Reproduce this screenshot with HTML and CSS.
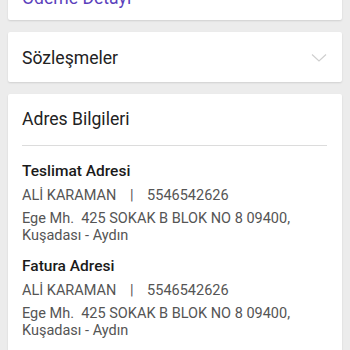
FILE: index.html
```
<!DOCTYPE html>
<html lang="tr">
<head>
<meta charset="utf-8">
<link rel="stylesheet" href="styles.css">
</head>
<body>
<div class="page">
  <div class="card card-top">
    <span class="link">Ödeme Detayı</span>
  </div>
  <div class="card card-row">
    <span class="title">Sözleşmeler</span>
    <svg class="chev" width="16" height="10" viewBox="0 0 16 10"><path d="M1 1.5 L8 8 L15 1.5" fill="none" stroke="#cfcfcf" stroke-width="1.2"/></svg>
  </div>
  <div class="card card-addr">
    <div class="title addr-title">Adres Bilgileri</div>
    <div class="divider"></div>
    <div class="group">
      <div class="label">Teslimat Adresi</div>
      <div class="name">ALİ KARAMAN <span class="sep">|</span> 5546542626</div>
      <div class="addr">Ege Mh.&nbsp; 425 SOKAK B BLOK NO 8 09400,<br>Kuşadası - Aydın</div>
    </div>
    <div class="group">
      <div class="label">Fatura Adresi</div>
      <div class="name">ALİ KARAMAN <span class="sep">|</span> 5546542626</div>
      <div class="addr">Ege Mh.&nbsp; 425 SOKAK B BLOK NO 8 09400,<br>Kuşadası - Aydın</div>
    </div>
  </div>
</div>
</body>
</html>
```
FILE: styles.css
```
html, body {
  margin: 0;
  padding: 0;
  background: #ececec;
  font-family: Roboto, "Noto Sans", sans-serif;
  overflow: hidden;
}
.page {
  padding: 0 8px;
  margin-top: -29px;
  display: flex;
  flex-direction: column;
  gap: 12px;
}
.card {
  background: #fff;
  border-radius: 2px;
  box-shadow: 0 1px 2px rgba(0,0,0,0.12);
}
.card-top {
  padding: 17px 14px 11px;
  line-height: 20px;
}
.link {
  color: #5b3fbc;
  font-size: 17.6px;
}
.card-row {
  padding: 16px 15px 14px 14px;
  line-height: 20px;
  display: flex;
  align-items: center;
  justify-content: space-between;
}
.title {
  font-size: 17.6px;
  color: #222;
  line-height: 20px;
}
.chev {
  display: block;
}
.card-addr {
  padding: 15px 15px 20px 14px;
}
.addr-title {
  margin-bottom: 16px;
}
.divider {
  height: 1px;
  background: #dcdcdc;
  margin-bottom: 16px;
}
.group {
  margin-bottom: 13px;
}
.label {
  font-size: 15.5px;
  font-weight: 500;
  color: #1a1a1a;
  line-height: 18px;
  margin-bottom: 7px;
}
.name {
  font-size: 14.5px;
  color: #555;
  line-height: 17px;
  margin-bottom: 6px;
}
.sep {
  padding: 0 10px;
}
.addr {
  font-size: 14.5px;
  color: #555;
  line-height: 17px;
}
```
